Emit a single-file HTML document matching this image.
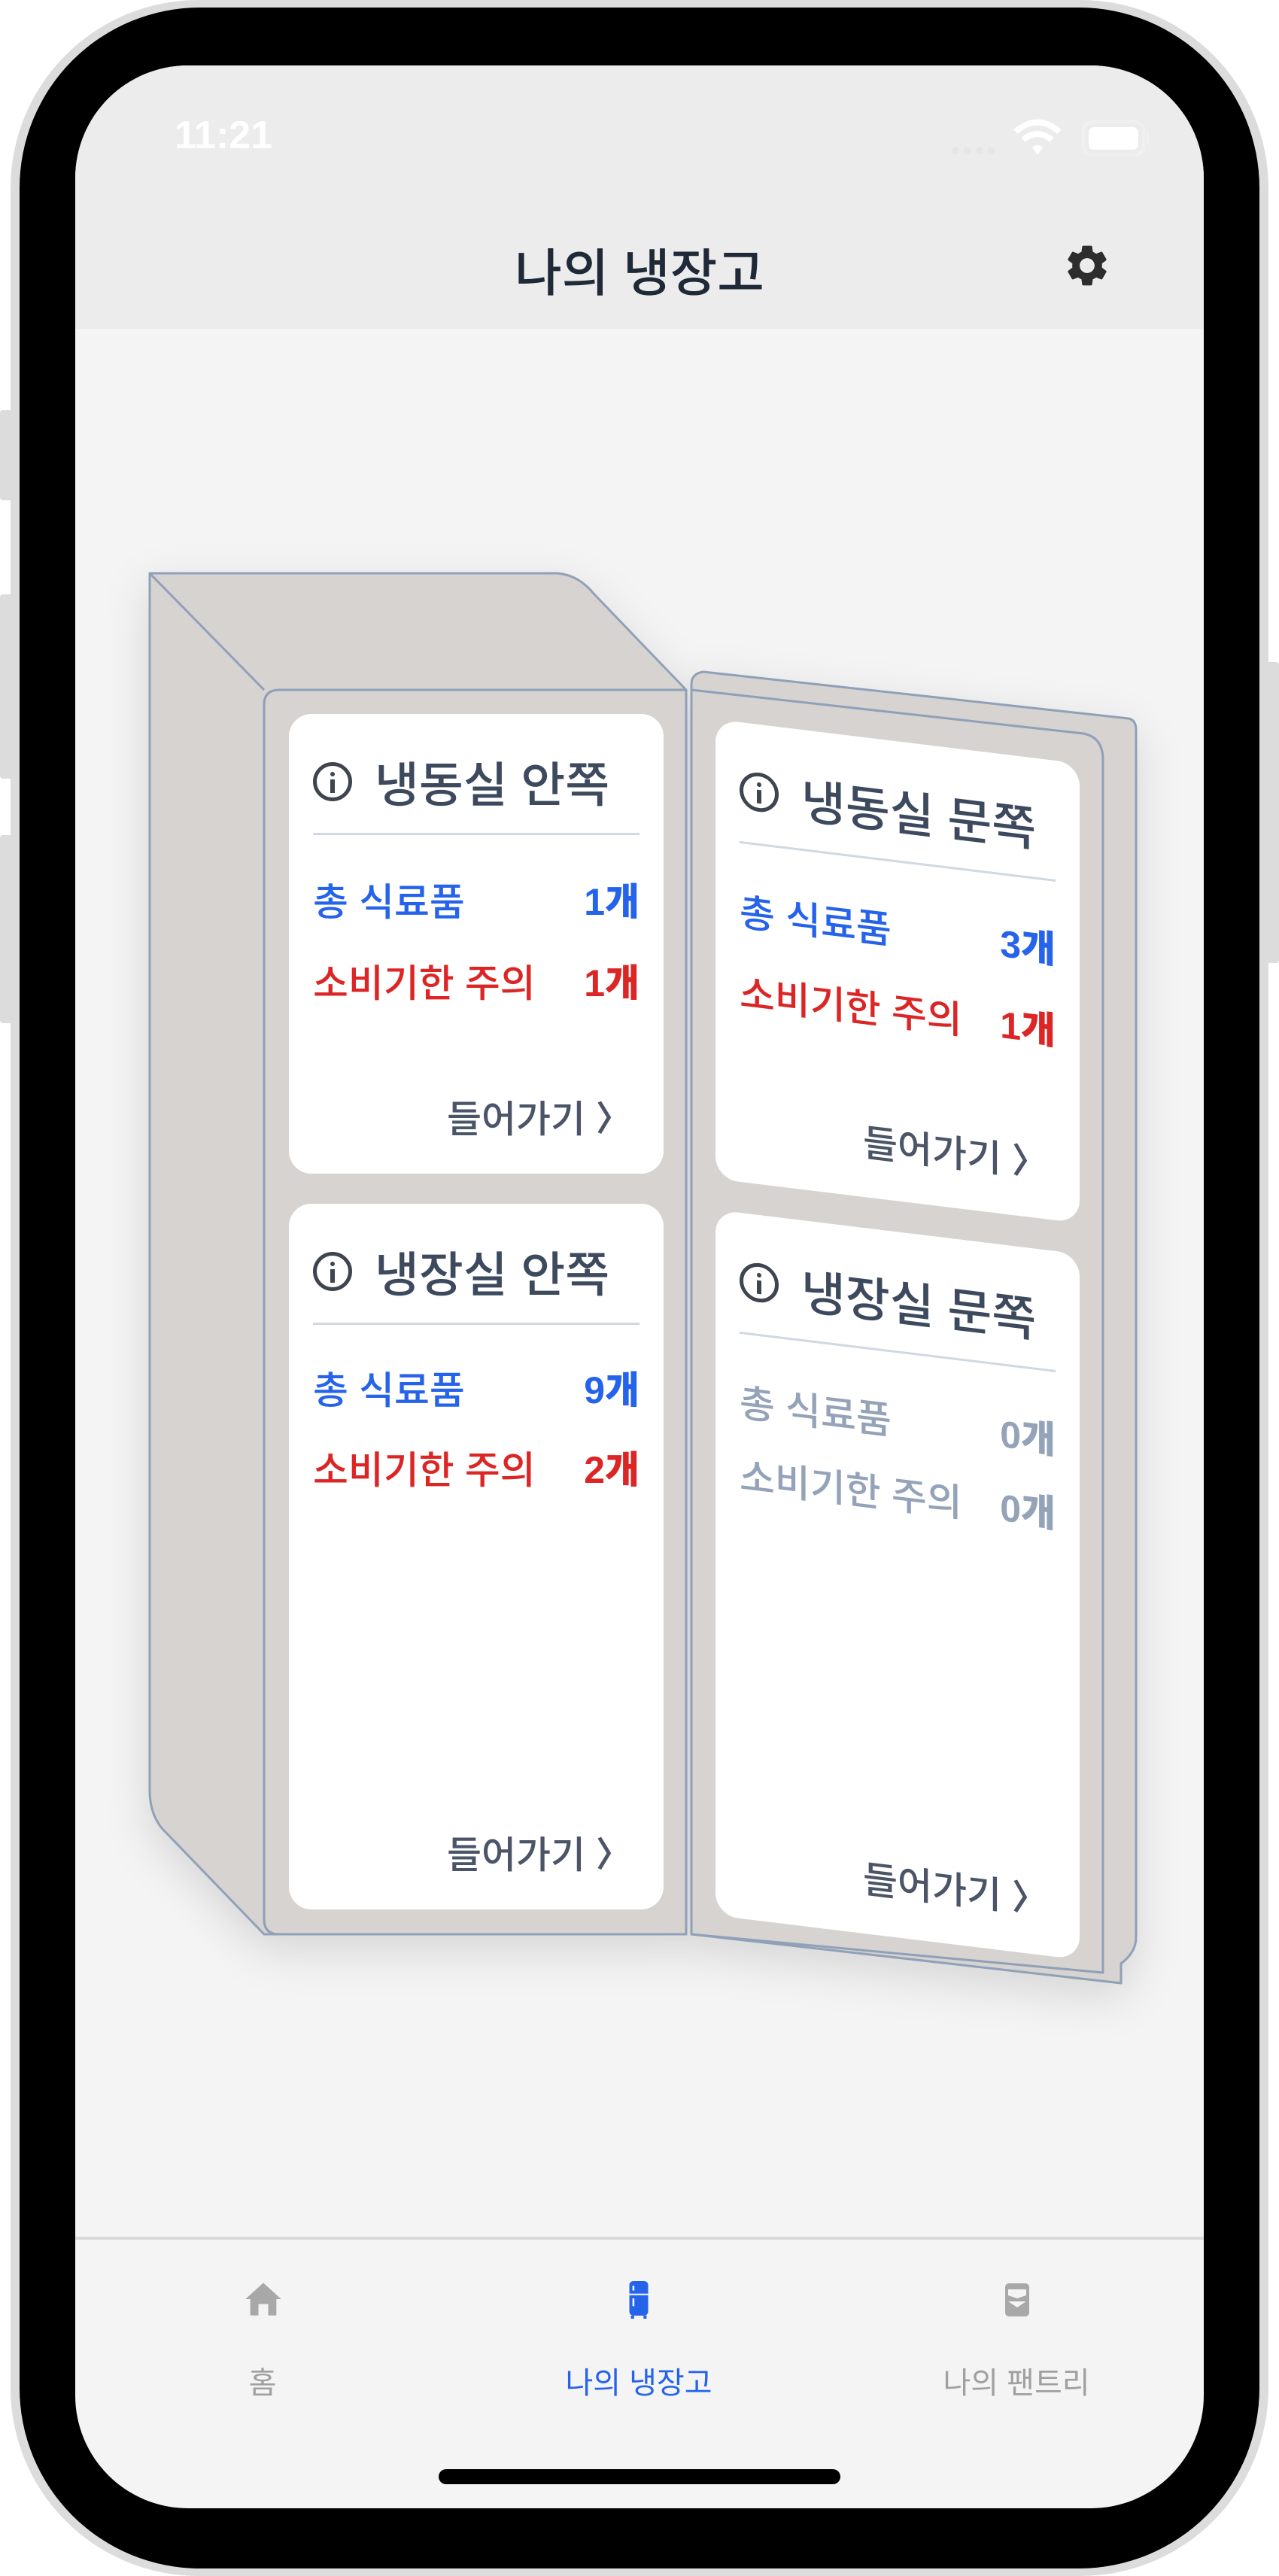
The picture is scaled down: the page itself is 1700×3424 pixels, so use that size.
<!DOCTYPE html>
<html><head><meta charset="utf-8">
<style>
*{margin:0;padding:0;box-sizing:border-box}
body{width:1700px;height:3424px;background:#fff;position:relative;overflow:hidden;font-family:"Liberation Sans","Noto Sans CJK KR",sans-serif}
.abs{position:absolute}
.card{position:absolute;background:#fff;border-radius:30px}
.ttl{position:absolute;left:32px;top:52px;height:76px;display:flex;align-items:center;font-size:64px;color:#3d4a5e;white-space:nowrap;font-weight:500}
.ico{width:52px;height:52px;border:5px solid #3f4550;border-radius:50%;margin-right:30px;position:relative;flex:none}
.ico:before{content:"";position:absolute;left:18px;top:8px;width:6px;height:6px;background:#3f4550;border-radius:50%}
.ico:after{content:"";position:absolute;left:18px;top:18px;width:6px;height:18px;background:#3f4550}
.div{position:absolute;left:32px;right:32px;top:158px;height:3px;background:#cfd8e3}
.row{position:absolute;left:32px;right:32px;height:60px;display:flex;justify-content:space-between;align-items:center;font-size:51px;white-space:nowrap;font-weight:500}
.row b{font-weight:900;font-size:50px}
.blue{color:#2563eb}.red{color:#dc2626}.gray{color:#94a3b8}
.enter{position:absolute;right:44px;bottom:40px;font-size:50px;color:#4b5567;display:flex;align-items:center;white-space:nowrap;font-weight:500}
.enter span{margin-left:14px;font-size:46px;font-weight:bold}
</style></head><body>
<!-- phone frame -->
<div class="abs" style="left:14px;top:0;width:1672px;height:3424px;border-radius:250px;background:#dcdcdc"></div>
<div class="abs" style="left:0;top:545px;width:18px;height:120px;background:#dcdcdc;border-radius:4px"></div>
<div class="abs" style="left:0;top:790px;width:18px;height:245px;background:#dcdcdc;border-radius:4px"></div>
<div class="abs" style="left:0;top:1110px;width:18px;height:250px;background:#dcdcdc;border-radius:4px"></div>
<div class="abs" style="left:1682px;top:880px;width:18px;height:400px;background:#dcdcdc;border-radius:4px"></div>
<div class="abs" style="left:26px;top:10px;width:1648px;height:3404px;border-radius:240px;background:#000"></div>
<div class="abs" style="left:100px;top:87px;width:1500px;height:3247px;border-radius:150px;background:#f4f4f4;overflow:hidden">
  <div class="abs" style="left:0;top:0;width:1500px;height:350px;background:#ececec"></div>
  <div class="abs" style="left:0;top:2886px;width:1500px;height:4px;background:#dadada"></div>
</div>
<!-- status -->
<div class="abs" style="left:232px;top:150px;font-size:52px;color:#fff;font-weight:bold">11:21</div>
<svg class="abs" style="left:1250px;top:150px" width="290" height="70" viewBox="0 0 290 70">
  <g fill="#e6e6e6"><circle cx="20" cy="50" r="5"/><circle cx="36" cy="50" r="5"/><circle cx="52" cy="50" r="5"/><circle cx="68" cy="50" r="5"/></g>
  <path d="M100 25 Q129 0 158 25" stroke="#fff" stroke-width="8" fill="none"/>
  <path d="M110 36 Q129 20 148 36" stroke="#fff" stroke-width="8" fill="none"/>
  <path d="M122 46 L129 56 L136 46 Q129 40 122 46Z" fill="#fff"/>
  <rect x="190" y="12" width="80" height="44" rx="12" fill="none" stroke="#f0f0f0" stroke-width="4"/>
  <rect x="197" y="19" width="66" height="30" rx="7" fill="#fff"/>
  <rect x="273" y="27" width="4" height="14" rx="2" fill="#f0f0f0"/>
</svg>
<!-- header -->
<div class="abs" style="left:0;width:1700px;top:308px;text-align:center;font-size:68px;color:#1f2937;font-weight:500">나의 냉장고</div>
<svg class="abs" style="left:1412px;top:320px" width="66" height="66" viewBox="0 0 24 24"><path fill="#2d2d2d" d="M19.14 12.94c.04-.3.06-.61.06-.94 0-.32-.02-.64-.07-.94l2.030-1.58a.49.49 0 0 0 .12-.61l-1.92-3.32a.488.488 0 0 0-.59-.22l-2.39.96c-.5-.38-1.03-.7-1.62-.94l-.36-2.54a.484.484 0 0 0-.48-.41h-3.84c-.24 0-.43.17-.47.41l-.36 2.54c-.59.24-1.130.57-1.62.94l-2.39-.96c-.22-.08-.47 0-.59.22L2.74 8.87c-.12.21-.08.47.12.61l2.03 1.58c-.05.3-.09.63-.09.94s.02.64.07.94l-2.03 1.58a.49.49 0 0 0-.12.61l1.92 3.32c.12.22.37.29.59.22l2.39-.96c.5.38 1.03.7 1.62.94l.36 2.54c.05.24.24.41.48.41h3.84c.24 0 .44-.17.47-.41l.36-2.54c.59-.24 1.13-.56 1.62-.94l2.39.96c.22.08.47 0 .59-.22l1.92-3.32c.12-.22.07-.47-.12-.61l-2.01-1.58zM12 15.6c-1.98 0-3.6-1.62-3.6-3.6s1.62-3.6 3.6-3.6 3.6 1.62 3.6 3.6-1.62 3.6-3.6 3.6z"/></svg>
<!-- fridge -->
<svg class="abs" style="left:0;top:0;filter:drop-shadow(0 20px 30px rgba(0,0,0,.12))" width="1700" height="3424">
  <g stroke="#8fa0b8" stroke-width="3" fill="#d6d3d0" stroke-linejoin="round">
    <path d="M199 762 L742 762 Q770 765 790 790 L912 917 L912 2571 L351 2571 L215 2430 Q199 2410 199 2380 Z"/>
    <path d="M199 762 L351 917" fill="none"/>
    <path d="M371 917 L912 917 L912 2571 L371 2571 Q351 2571 351 2551 L351 937 Q351 917 371 917Z"/>
    <path d="M935 893 L1500 955 Q1510 957 1510 970 L1510 2575 Q1510 2595 1490 2610 L1490 2636 L919 2571 L919 910 Q919 895 935 893Z"/>
    <path d="M919 917 L1440 975 Q1466 980 1466 1010 L1466 2622 L919 2571 Z"/>
  </g>
</svg>
<!-- left cards -->
<div class="card" style="left:384px;top:949px;width:498px;height:611px">
  <div class="ttl"><div class="ico"></div>냉동실 안쪽</div>
  <div class="div"></div>
  <div class="row blue" style="top:216px"><span>총 식료품</span><b>1개</b></div>
  <div class="row red" style="top:324px"><span>소비기한 주의</span><b>1개</b></div>
  <div class="enter">들어가기<span>〉</span></div>
</div>
<div class="card" style="left:384px;top:1600px;width:498px;height:938px">
  <div class="ttl"><div class="ico"></div>냉장실 안쪽</div>
  <div class="div"></div>
  <div class="row blue" style="top:214px"><span>총 식료품</span><b>9개</b></div>
  <div class="row red" style="top:320px"><span>소비기한 주의</span><b>2개</b></div>
  <div class="enter">들어가기<span>〉</span></div>
</div>
<!-- right cards (skewed) -->
<div class="card" style="left:951px;top:956px;width:484px;height:611px;transform-origin:0 0;transform:skewY(6.93deg)">
  <div class="ttl"><div class="ico"></div>냉동실 문쪽</div>
  <div class="div"></div>
  <div class="row blue" style="top:218px"><span>총 식료품</span><b>3개</b></div>
  <div class="row red" style="top:326px"><span>소비기한 주의</span><b>1개</b></div>
  <div class="enter">들어가기<span>〉</span></div>
</div>
<div class="card" style="left:951px;top:1608px;width:484px;height:938px;transform-origin:0 0;transform:skewY(6.93deg)">
  <div class="ttl"><div class="ico"></div>냉장실 문쪽</div>
  <div class="div"></div>
  <div class="row gray" style="top:218px"><span>총 식료품</span><b>0개</b></div>
  <div class="row gray" style="top:316px"><span>소비기한 주의</span><b>0개</b></div>
  <div class="enter">들어가기<span>〉</span></div>
</div>
<!-- tab bar -->
<svg class="abs" style="left:324px;top:3030px" width="52" height="52" viewBox="0 0 24 24"><path fill="#a8a8a8" d="M12 2 L1 12 H4 V22 H9 V15 H15 V22 H20 V12 H23 Z"/></svg>
<svg class="abs" style="left:836px;top:3032px" width="26" height="50" viewBox="0 0 12 24"><rect x="0" y="0" width="12" height="22" rx="2.5" fill="#2563eb"/><rect x="0" y="8" width="12" height="1" fill="#f4f4f4"/><rect x="2" y="3" width="1.2" height="3" fill="#fff"/><rect x="2" y="11" width="1.2" height="5" fill="#fff"/><rect x="1" y="22" width="2" height="2" fill="#2563eb"/><rect x="9" y="22" width="2" height="2" fill="#2563eb"/></svg>
<svg class="abs" style="left:1336px;top:3035px" width="32" height="44" viewBox="0 0 16 22"><rect x="0" y="0" width="16" height="22" rx="2.5" fill="#a8a8a8"/><path d="M2 4 H14 V8 L8 10 L2 8Z" fill="#f4f4f4"/><path d="M2 12 H14 L8 16Z" fill="#f4f4f4"/></svg>
<div class="abs" style="left:249px;width:200px;text-align:center;top:3135px;font-size:40px;color:#a0a0a0">홈</div>
<div class="abs" style="left:699px;width:300px;text-align:center;top:3135px;font-size:40px;color:#2563eb">나의 냉장고</div>
<div class="abs" style="left:1201px;width:300px;text-align:center;top:3135px;font-size:40px;color:#a0a0a0">나의 팬트리</div>
<div class="abs" style="left:583px;top:3282px;width:534px;height:20px;border-radius:10px;background:#000"></div>
</body></html>
